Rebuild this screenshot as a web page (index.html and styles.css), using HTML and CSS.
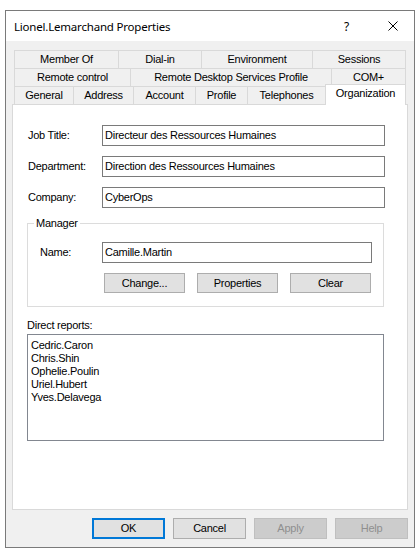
FILE: index.html
```html
<!DOCTYPE html>
<html>
<head>
<meta charset="utf-8">
<title>Lionel.Lemarchand Properties</title>
<link rel="stylesheet" href="styles.css">
</head>
<body>
<div class="window">
  <div class="titlebar">
    <span class="title">Lionel.Lemarchand Properties</span>
    <span class="help">?</span>
    <svg class="close" viewBox="0 0 10 10" width="10" height="10"><path d="M0.5 0.5 L9.5 9.5 M9.5 0.5 L0.5 9.5" stroke="#000" stroke-width="1" fill="none"/></svg>
  </div>
  <div class="body">
    <div class="tabs">
      <div class="tabrow row1">
        <div class="tab">Member Of</div>
        <div class="tab">Dial-in</div>
        <div class="tab">Environment</div>
        <div class="tab">Sessions</div>
      </div>
      <div class="tabrow row2">
        <div class="tab">Remote control</div>
        <div class="tab">Remote Desktop Services Profile</div>
        <div class="tab">COM+</div>
      </div>
      <div class="tabrow row3">
        <div class="tab">General</div>
        <div class="tab">Address</div>
        <div class="tab">Account</div>
        <div class="tab">Profile</div>
        <div class="tab">Telephones</div>
        <div class="tab active">Organization</div>
      </div>
    </div>
    <div class="panel">
      <div class="fields">
        <label class="lbl">Job Title:</label>
        <div class="input">Directeur des Ressources Humaines</div>
        <label class="lbl">Department:</label>
        <div class="input">Direction des Ressources Humaines</div>
        <label class="lbl">Company:</label>
        <div class="input">CyberOps</div>
      </div>
      <fieldset class="group">
        <legend>Manager</legend>
        <div class="group-body">
          <div class="name-row">
            <label class="lbl">Name:</label>
            <div class="input">Camille.Martin</div>
          </div>
          <div class="group-buttons">
            <button class="btn small">Change...</button>
            <button class="btn small">Properties</button>
            <button class="btn small">Clear</button>
          </div>
        </div>
      </fieldset>
      <div class="reports-label">Direct reports:</div>
      <div class="listbox">
        <div class="item">Cedric.Caron</div>
        <div class="item">Chris.Shin</div>
        <div class="item">Ophelie.Poulin</div>
        <div class="item">Uriel.Hubert</div>
        <div class="item">Yves.Delavega</div>
      </div>
    </div>
    <div class="footer">
      <button class="btn default">OK</button>
      <button class="btn">Cancel</button>
      <button class="btn" disabled>Apply</button>
      <button class="btn" disabled>Help</button>
    </div>
  </div>
</div>
</body>
</html>
```

FILE: styles.css
```css
* {
  box-sizing: border-box;
}

body {
  margin: 0;
  background: #ffffff;
  font-family: "Liberation Sans", Arial, sans-serif;
  font-size: 11px;
  line-height: 13px;
  letter-spacing: -0.25px;
  color: #000000;
}

.window {
  margin: 10px 0 0 5px;
  width: 410px;
  height: 538px;
  border: 1px solid #7a7a7a;
  display: flex;
  flex-direction: column;
}

.titlebar {
  height: 30px;
  flex: none;
  background: #ffffff;
  display: flex;
  align-items: center;
  padding-left: 8px;
  font-family: "Noto Sans", "Open Sans", sans-serif;
  font-size: 11.5px;
  letter-spacing: -0.2px;
}

.title {
  flex: 1;
}

.help {
  margin-right: 39px;
  font-size: 12px;
}

.close {
  display: block;
  margin-right: 16px;
}

.body {
  flex: 1;
  background: #f0f0f0;
  padding: 9px 6px 0 6px;
}

.tabs {
  margin-left: 2px;
  width: 392px;
}

.tabrow {
  display: grid;
  grid-template-rows: 18px;
  height: 18px;
}

.row1 {
  grid-template-columns: 104px 83px 111px 94px;
}

.row2 {
  grid-template-columns: 116px 201px 75px;
}

.row3 {
  grid-template-columns: 59px 60px 62px 52px 78px 81px;
}

.tab {
  border-top: 1px solid #d9d9d9;
  border-left: 1px solid #d9d9d9;
  display: flex;
  align-items: center;
  justify-content: center;
  white-space: nowrap;
  background: #f0f0f0;
}

.tab:last-child {
  border-right: 1px solid #d9d9d9;
}

.tab.active {
  background: #ffffff;
  height: 21px;
  margin-top: -2px;
  position: relative;
  z-index: 1;
  align-items: flex-start;
  padding-top: 2px;
}

.panel {
  width: 396px;
  height: 406px;
  background: #ffffff;
  border: 1px solid #d9d9d9;
  padding: 20px 22px 0 14px;
}

.fields {
  display: grid;
  grid-template-columns: 75px 283px;
  row-gap: 10px;
  align-items: center;
}

.lbl {
  padding-left: 1px;
}

.input {
  height: 21px;
  border: 1px solid #7a7a7a;
  padding: 0 2px;
  display: flex;
  align-items: center;
  white-space: nowrap;
  background: #ffffff;
}

.group {
  margin: 9px 0 0 0;
  width: 357px;
  border: 1px solid #dcdcdc;
  padding: 0;
  min-width: 0;
}

.group legend {
  margin-left: 6px;
  padding: 0 2px;
  line-height: 13px;
}

.group-body {
  padding: 12px 11px 13px 12px;
}

.name-row {
  display: grid;
  grid-template-columns: 62px 270px;
  align-items: center;
}

.name-row .lbl {
  padding-left: 0;
}

.group-buttons {
  display: flex;
  gap: 12px;
  margin-top: 10px;
  padding-left: 64px;
}

.btn {
  width: 73px;
  height: 21px;
  background: #e1e1e1;
  border: 1px solid #adadad;
  font: inherit;
  letter-spacing: inherit;
  color: #000000;
  padding: 0;
  margin: 0;
}

.btn.small {
  width: 81px;
  height: 20px;
}

.btn.default {
  border: 2px solid #0078d7;
}

.btn:disabled {
  background: #cccccc;
  border-color: #bfbfbf;
  color: #8f8f8f;
}

.reports-label {
  margin-top: 12px;
}

.listbox {
  margin-top: 2px;
  width: 357px;
  height: 107px;
  border: 1px solid #828790;
  padding: 4px 3px;
}

.footer {
  display: flex;
  justify-content: flex-end;
  gap: 8px;
  margin-top: 8px;
}
```
